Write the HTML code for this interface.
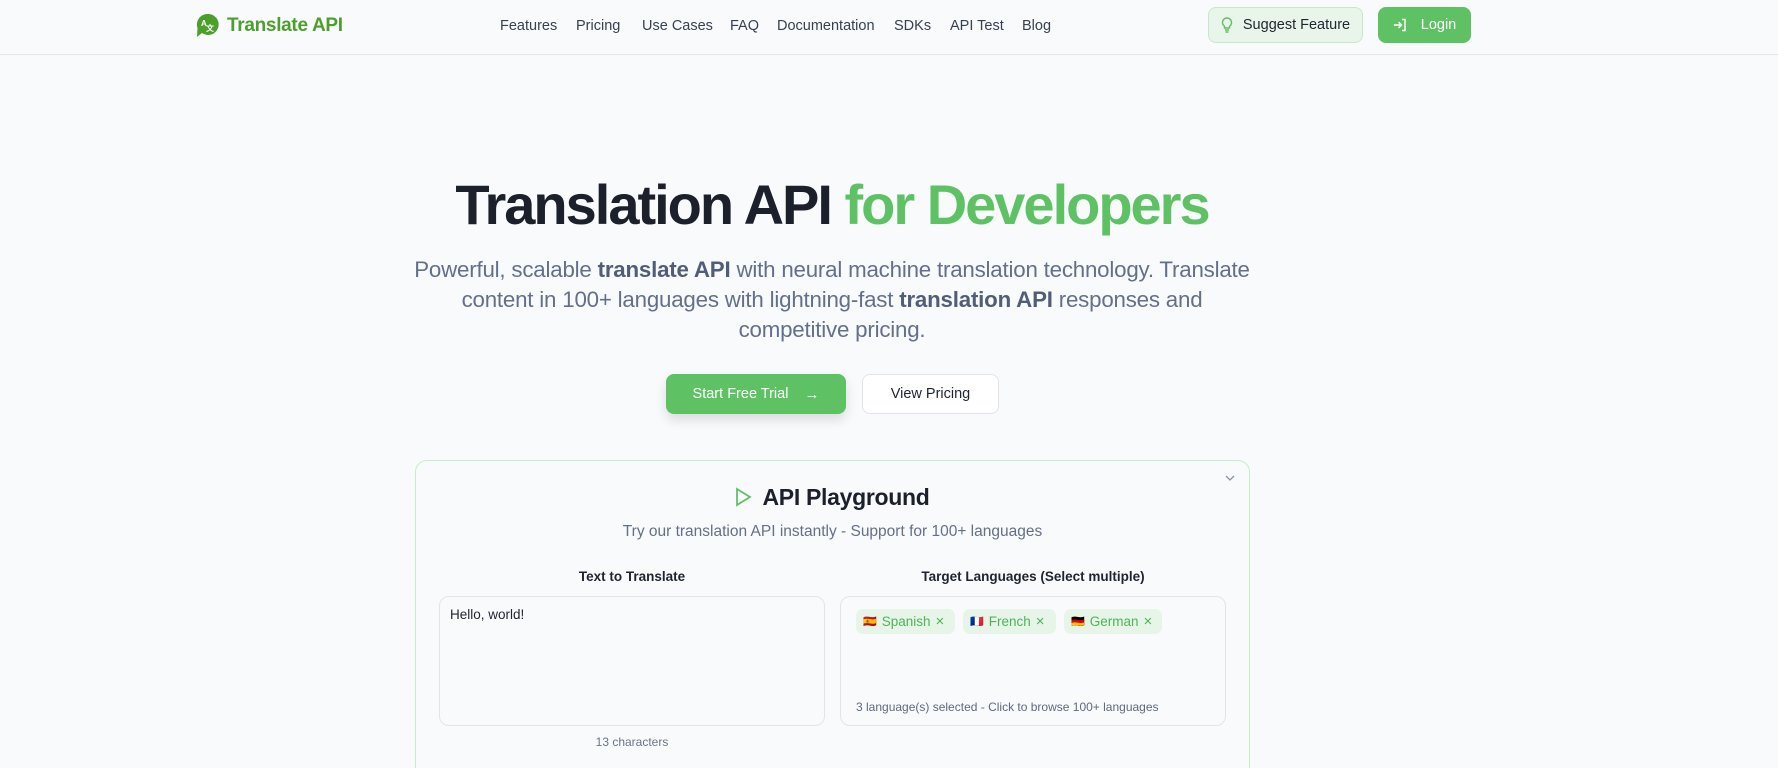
<!DOCTYPE html>
<html style="height:768px;overflow:hidden"><head><meta charset="utf-8"><style>
*{box-sizing:border-box;margin:0;padding:0}
body{width:1778px;height:768px;overflow:hidden;background:#f8fafc;font-family:"Liberation Sans",sans-serif;color:#1f2430;position:relative}
.abs{position:absolute}
header{position:absolute;left:0;top:0;width:1778px;height:55px;border-bottom:1px solid #e5e7eb;background:#f9fafb}
.logo{left:196px;top:13px;display:flex;align-items:center;gap:8px;color:#4c9f2c;font-weight:bold;font-size:19px;letter-spacing:-0.3px}
.nav{top:18px;font-size:14.5px;color:#374151}
.btn{display:flex;align-items:center;justify-content:center;border-radius:8px;font-size:14.5px}
h1{position:absolute;left:432px;width:800px;top:172px;text-align:center;font-size:56px;font-weight:bold;letter-spacing:-2px;color:#1c202b}
h1 span{color:#5ec265}
.sub{position:absolute;left:412px;width:840px;top:255px;text-align:center;font-size:22.3px;line-height:30px;color:#64708a;letter-spacing:-0.2px}
.sub b{color:#525d78}
.card{left:415px;top:460px;width:835px;height:330px;border:1.5px solid #c9ebcb;border-radius:12px;background:#f9fafb}
.box{top:596px;width:386px;height:130px;border:1px solid #e1e5ea;border-radius:10px;background:#f9fafb}
.chip{top:609px;height:25px;border-radius:7px;background:#e7f4e8;color:#4eb457;font-size:13.5px;display:flex;align-items:center;padding-left:7px;gap:5px}
.lbl{top:569px;font-size:13.5px;font-weight:bold;color:#1f2430;text-align:center}
</style></head><body>
<header></header>
<div class="abs logo"><svg width="23" height="26" viewBox="0 0 23 26"><path d="M11.5 1a10.5 10.5 0 0 0-10 14l-0.5 9 5-4A10.5 10.5 0 1 0 11.5 1z" fill="#4c9f2c"/><text x="5" y="13" font-size="8" fill="#fff" font-family="Liberation Sans">A</text><text x="10" y="18" font-size="8" fill="#fff" font-family="Noto Sans CJK SC">文</text></svg>Translate API</div>
<div class="abs nav" style="left:500px">Features</div>
<div class="abs nav" style="left:576px">Pricing</div>
<div class="abs nav" style="left:642px">Use Cases</div>
<div class="abs nav" style="left:730px">FAQ</div>
<div class="abs nav" style="left:777px">Documentation</div>
<div class="abs nav" style="left:894px">SDKs</div>
<div class="abs nav" style="left:950px">API Test</div>
<div class="abs nav" style="left:1022px">Blog</div>
<div class="abs btn" style="left:1208px;top:7px;width:155px;height:36px;background:#e9f5ea;border:1px solid #c5e8c7;color:#1f2430;gap:10px"><svg width="12" height="16" viewBox="0 0 12 16" fill="none" stroke="#5ec265" stroke-width="1.4"><path d="M6 1a4.5 4.5 0 0 0-2.5 8.2V11h5V9.2A4.5 4.5 0 0 0 6 1zM4 13h4M4.5 15h3"/></svg>Suggest Feature</div>
<div class="abs btn" style="left:1378px;top:7px;width:93px;height:36px;background:#5ec265;color:#fff;gap:14px"><svg width="14" height="14" viewBox="0 0 14 14" fill="none" stroke="#fff" stroke-width="1.4"><path d="M1 7h7M5.5 4L8.5 7 5.5 10M9 1.5h3v11H9"/></svg>Login</div>

<h1>Translation API <span>for Developers</span></h1>
<div class="sub">Powerful, scalable <b>translate API</b> with neural machine translation technology. Translate content in 100+ languages with lightning-fast <b>translation API</b> responses and competitive pricing.</div>

<div class="abs btn" style="left:666px;top:374px;width:180px;height:40px;background:#5ec265;color:#fff;gap:16px;box-shadow:0 6px 12px rgba(0,0,0,0.12)">Start Free Trial<span style="font-size:15px">→</span></div>
<div class="abs btn" style="left:862px;top:374px;width:137px;height:40px;background:#fff;border:1px solid #e1e5ea;color:#1f2430">View Pricing</div>

<div class="abs card"></div>
<svg class="abs" style="left:1224px;top:474px" width="12" height="8" viewBox="0 0 12 8" fill="none" stroke="#8a93a3" stroke-width="1.3"><path d="M2 2l4 4 4-4"/></svg>
<div class="abs" style="left:415px;width:835px;top:484px;text-align:center;font-size:23px;font-weight:bold;color:#1c202b;letter-spacing:-0.3px"><svg width="17" height="20" viewBox="0 0 17 20" fill="none" stroke="#5ec265" stroke-width="1.8" style="vertical-align:-2px;margin-right:10px"><path d="M2 2l13 8-13 8z"/></svg>API Playground</div>
<div class="abs" style="left:415px;width:835px;top:523px;text-align:center;font-size:15.5px;color:#64708a">Try our translation API instantly - Support for 100+ languages</div>
<div class="abs lbl" style="left:439px;width:386px">Text to Translate</div>
<div class="abs lbl" style="left:840px;width:386px">Target Languages (Select multiple)</div>
<div class="abs box" style="left:439px"></div>
<div class="abs box" style="left:840px"></div>
<div class="abs" style="left:450px;top:607px;font-size:13.5px;color:#1f2430">Hello, world!</div>
<div class="abs" style="left:439px;width:386px;top:735px;text-align:center;font-size:12px;color:#6b7588">13 characters</div>
<div class="abs chip" style="left:856px;width:99px"><span style="font-size:11px">🇪🇸</span>Spanish <span style="font-size:15px">×</span></div>
<div class="abs chip" style="left:963px;width:93px"><span style="font-size:11px">🇫🇷</span>French <span style="font-size:15px">×</span></div>
<div class="abs chip" style="left:1064px;width:98px"><span style="font-size:11px">🇩🇪</span>German <span style="font-size:15px">×</span></div>
<div class="abs" style="left:856px;top:700px;font-size:12px;color:#5f6a80">3 language(s) selected - Click to browse 100+ languages</div>
</body></html>
